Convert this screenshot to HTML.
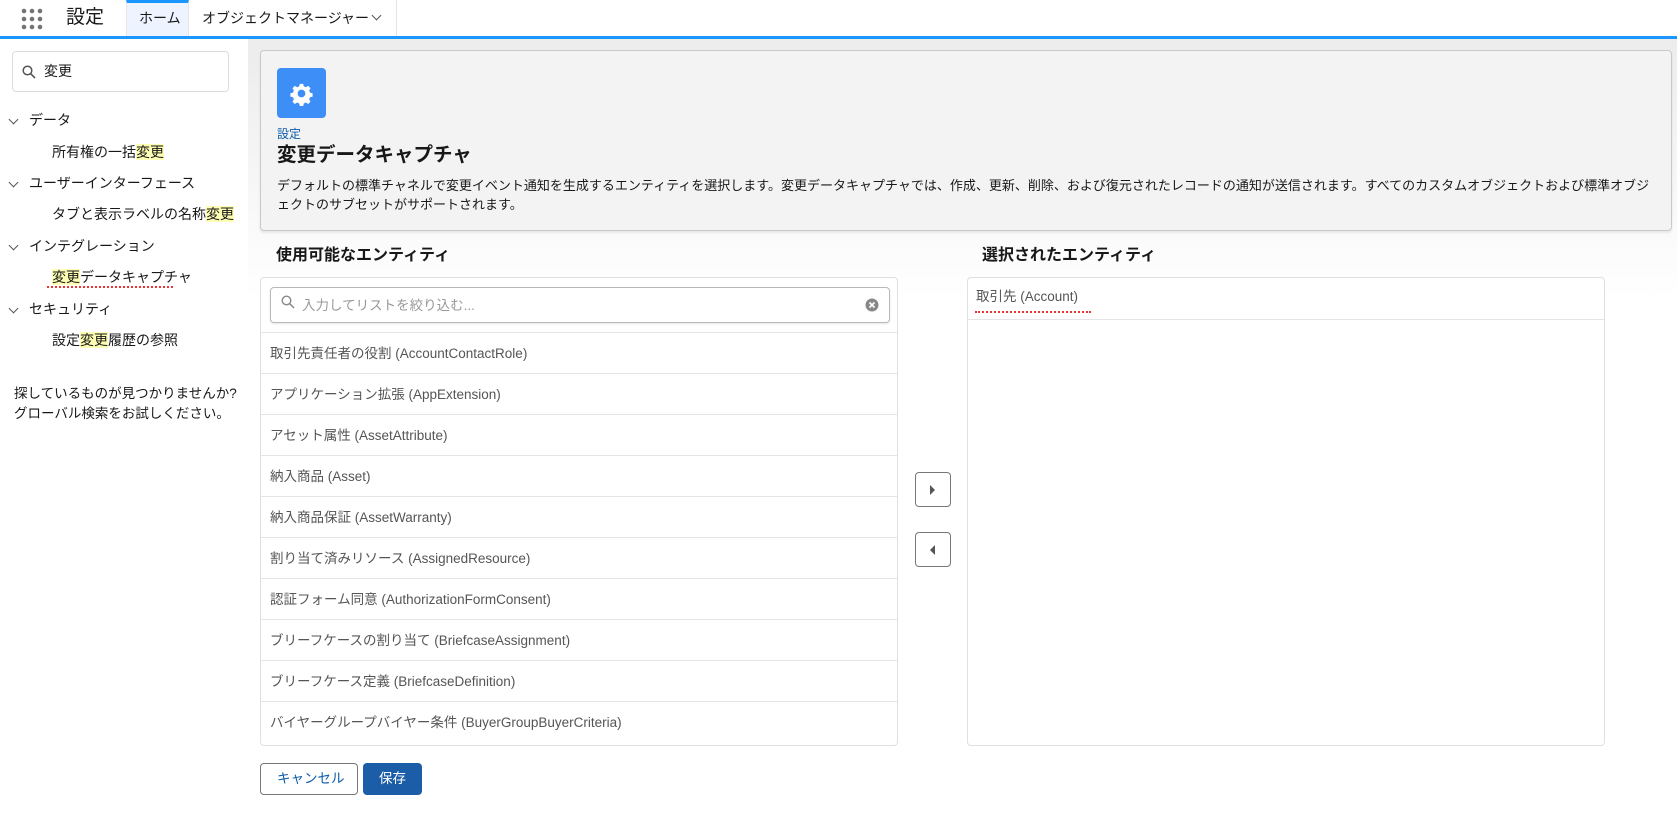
<!DOCTYPE html>
<html><head><meta charset="utf-8"><style>
*{box-sizing:border-box;margin:0;padding:0}
body{width:1677px;height:824px;overflow:hidden;background:#fff;font-family:"Liberation Sans","Noto Sans CJK JP",sans-serif;color:#181818;position:relative}
.abs{position:absolute}
.top{left:0;top:0;width:1677px;height:36px;background:#fff}
.topline{left:0;top:36px;width:1677px;height:3px;background:#1b96ff}
.side{left:0;top:39px;width:248px;height:785px;background:#fff}
.main{left:248px;top:39px;width:1429px;height:785px;background:linear-gradient(#ececec,#fff 260px)}
.hl{background:#fdfdb4}
.t{position:absolute;font-size:14px;white-space:nowrap;line-height:18px}
.chev{position:absolute;width:7px;height:7px;border-right:1.3px solid #555;border-bottom:1.3px solid #555;transform:rotate(45deg)}
.row{position:absolute;left:0;width:100%;height:41px;border-top:1px solid #e5e5e5;font-size:13.5px;color:#555;padding:9px 0 0 9px;white-space:nowrap}
</style></head><body>
<div class="abs top"></div>
<div class="abs topline"></div>
<svg class="abs" style="left:21px;top:8px" width="22" height="22"><g fill="#747474"><circle cx="3" cy="3" r="2.3"/><circle cx="11" cy="3" r="2.3"/><circle cx="19" cy="3" r="2.3"/><circle cx="3" cy="11" r="2.3"/><circle cx="11" cy="11" r="2.3"/><circle cx="19" cy="11" r="2.3"/><circle cx="3" cy="19" r="2.3"/><circle cx="11" cy="19" r="2.3"/><circle cx="19" cy="19" r="2.3"/></g></svg>
<div class="t" style="left:66px;top:6px;font-size:19px;line-height:24px">設定</div>
<div class="abs" style="left:126px;top:0;width:63px;height:36px;background:#eef4ff;border-top:3px solid #1b96ff;border-right:1px solid #e5e5e5;border-left:1px solid #e5e5e5"></div>
<div class="t" style="left:139px;top:9px">ホーム</div>
<div class="t" style="left:202px;top:9px">オブジェクトマネージャー</div>
<div class="chev" style="left:373px;top:12px"></div>
<div class="abs" style="left:396px;top:0;width:1px;height:36px;background:#e5e5e5"></div>

<div class="abs side"></div>
<div class="abs" style="left:12px;top:51px;width:217px;height:41px;border:1px solid #dcdcdc;border-radius:4px"></div>
<svg class="abs" style="left:22px;top:65px" width="14" height="14"><circle cx="5.5" cy="5.5" r="4.3" fill="none" stroke="#555" stroke-width="1.5"/><path d="M8.8 8.8L13 13" stroke="#555" stroke-width="1.6"/></svg>
<div class="t" style="left:44px;top:62px">変更</div>

<div class="chev" style="left:10px;top:116px"></div><div class="t" style="left:29px;top:111px">データ</div>
<div class="t" style="left:52px;top:143px">所有権の一括<span class="hl">変更</span></div>
<div class="chev" style="left:10px;top:179px"></div><div class="t" style="left:29px;top:174px">ユーザーインターフェース</div>
<div class="t" style="left:52px;top:205px">タブと表示ラベルの名称<span class="hl">変更</span></div>
<div class="chev" style="left:10px;top:242px"></div><div class="t" style="left:29px;top:237px">インテグレーション</div>
<div class="t" style="left:52px;top:268px"><span class="hl">変更</span>データキャプチャ</div>
<div class="abs" style="left:47px;top:286px;width:126px;height:2px;border-bottom:2px dotted #e33"></div>
<div class="chev" style="left:10px;top:305px"></div><div class="t" style="left:29px;top:300px">セキュリティ</div>
<div class="t" style="left:52px;top:331px">設定<span class="hl">変更</span>履歴の参照</div>
<div class="t" style="left:14px;top:384px;font-size:13.5px;line-height:20px">探しているものが見つかりませんか?<br>グローバル検索をお試しください。</div>

<div class="abs main"></div>
<div class="abs" style="left:260px;top:50px;width:1412px;height:181px;background:#f3f3f3;border:1px solid #c9c9c9;border-radius:4px;box-shadow:0 2px 2px rgba(0,0,0,.08)"></div>
<div class="abs" style="left:277px;top:68px;width:49px;height:50px;background:#3d8ff7;border-radius:4px"></div>
<svg class="abs" style="left:286px;top:78px" width="31" height="31" viewBox="0 0 24 24"><path fill="#fff" d="M12 4.5l1.3 0 .5 2 1.6.7 1.8-1.1 1.8 1.8-1.1 1.8.7 1.6 2 .5v2.6l-2 .5-.7 1.6 1.1 1.8-1.8 1.8-1.8-1.1-1.6.7-.5 2h-2.6l-.5-2-1.6-.7-1.8 1.1-1.8-1.8 1.1-1.8-.7-1.6-2-.5v-2.6l2-.5.7-1.6-1.100-1.8 1.8-1.8 1.8 1.1 1.6-.7.5-2zM12 9a3 3 0 100 6 3 3 0 000-6z"/></svg>
<div class="t" style="left:277px;top:125px;font-size:12px;color:#0b5cab">設定</div>
<div class="t" style="left:277px;top:143px;font-size:19.5px;line-height:24px;font-weight:bold">変更データキャプチャ</div>
<div class="t" style="left:277px;top:176px;font-size:13px;line-height:19px;white-space:normal;width:1385px">デフォルトの標準チャネルで変更イベント通知を生成するエンティティを選択します。変更データキャプチャでは、作成、更新、削除、および復元されたレコードの通知が送信されます。すべてのカスタムオブジェクトおよび標準オブジェクトのサブセットがサポートされます。</div>

<div class="t" style="left:276px;top:246px;font-size:16px;line-height:20px;font-weight:bold">使用可能なエンティティ</div>
<div class="t" style="left:982px;top:246px;font-size:16px;line-height:20px;font-weight:bold">選択されたエンティティ</div>

<div class="abs" style="left:260px;top:277px;width:638px;height:469px;border:1px solid #e0e0e0;border-radius:4px;background:#fff;overflow:hidden">
 <div class="abs" style="left:9px;top:9px;width:620px;height:36px;border:1px solid #b8b8b8;border-radius:4px;box-shadow:0 1px 2px rgba(0,0,0,.1)"></div>
 <svg class="abs" style="left:20px;top:17px" width="14" height="14"><circle cx="5.5" cy="5.5" r="4.3" fill="none" stroke="#888" stroke-width="1.4"/><path d="M8.8 8.8L13 13" stroke="#888" stroke-width="1.5"/></svg>
 <div class="t" style="left:41px;top:19px;font-size:13.5px;color:#999">入力してリストを絞り込む...</div>
 <svg class="abs" style="left:604px;top:20px" width="14" height="14"><circle cx="7" cy="7" r="6.5" fill="#888"/><path d="M4.5 4.5l5 5M9.5 4.5l-5 5" stroke="#fff" stroke-width="1.6"/></svg>
 <div class="row" style="top:54px">取引先責任者の役割 (AccountContactRole)</div>
 <div class="row" style="top:95px">アプリケーション拡張 (AppExtension)</div>
 <div class="row" style="top:136px">アセット属性 (AssetAttribute)</div>
 <div class="row" style="top:177px">納入商品 (Asset)</div>
 <div class="row" style="top:218px">納入商品保証 (AssetWarranty)</div>
 <div class="row" style="top:259px">割り当て済みリソース (AssignedResource)</div>
 <div class="row" style="top:300px">認証フォーム同意 (AuthorizationFormConsent)</div>
 <div class="row" style="top:341px">ブリーフケースの割り当て (BriefcaseAssignment)</div>
 <div class="row" style="top:382px">ブリーフケース定義 (BriefcaseDefinition)</div>
 <div class="row" style="top:423px">バイヤーグループバイヤー条件 (BuyerGroupBuyerCriteria)</div>
</div>

<div class="abs" style="left:915px;top:472px;width:36px;height:35px;border:1px solid #777;border-radius:4px;background:#fff"></div>
<svg class="abs" style="left:929px;top:485px" width="8" height="10"><path d="M1 0L6 5L1 10z" fill="#555"/></svg>
<div class="abs" style="left:915px;top:532px;width:36px;height:35px;border:1px solid #777;border-radius:4px;background:#fff"></div>
<svg class="abs" style="left:929px;top:545px" width="8" height="10"><path d="M6 0L1 5L6 10z" fill="#555"/></svg>

<div class="abs" style="left:967px;top:277px;width:638px;height:469px;border:1px solid #e0e0e0;border-radius:4px;background:#fff">
 <div class="t" style="left:8px;top:10px;font-size:13.5px;color:#555">取引先 (Account)</div>
 <div class="abs" style="left:7px;top:33px;width:116px;height:2px;border-bottom:2px dotted #e33"></div>
 <div class="abs" style="left:0;top:41px;width:100%;height:1px;background:#e5e5e5"></div>
</div>

<div class="abs" style="left:260px;top:763px;width:98px;height:32px;border:1px solid #777;border-radius:4px;background:#fff"></div>
<div class="t" style="left:277px;top:770px;font-size:13.5px;color:#0b5cab">キャンセル</div>
<div class="abs" style="left:363px;top:763px;width:59px;height:32px;background:#1b5ea7;border-radius:4px"></div>
<div class="t" style="left:379px;top:770px;font-size:13.5px;color:#fff">保存</div>
</body></html>
